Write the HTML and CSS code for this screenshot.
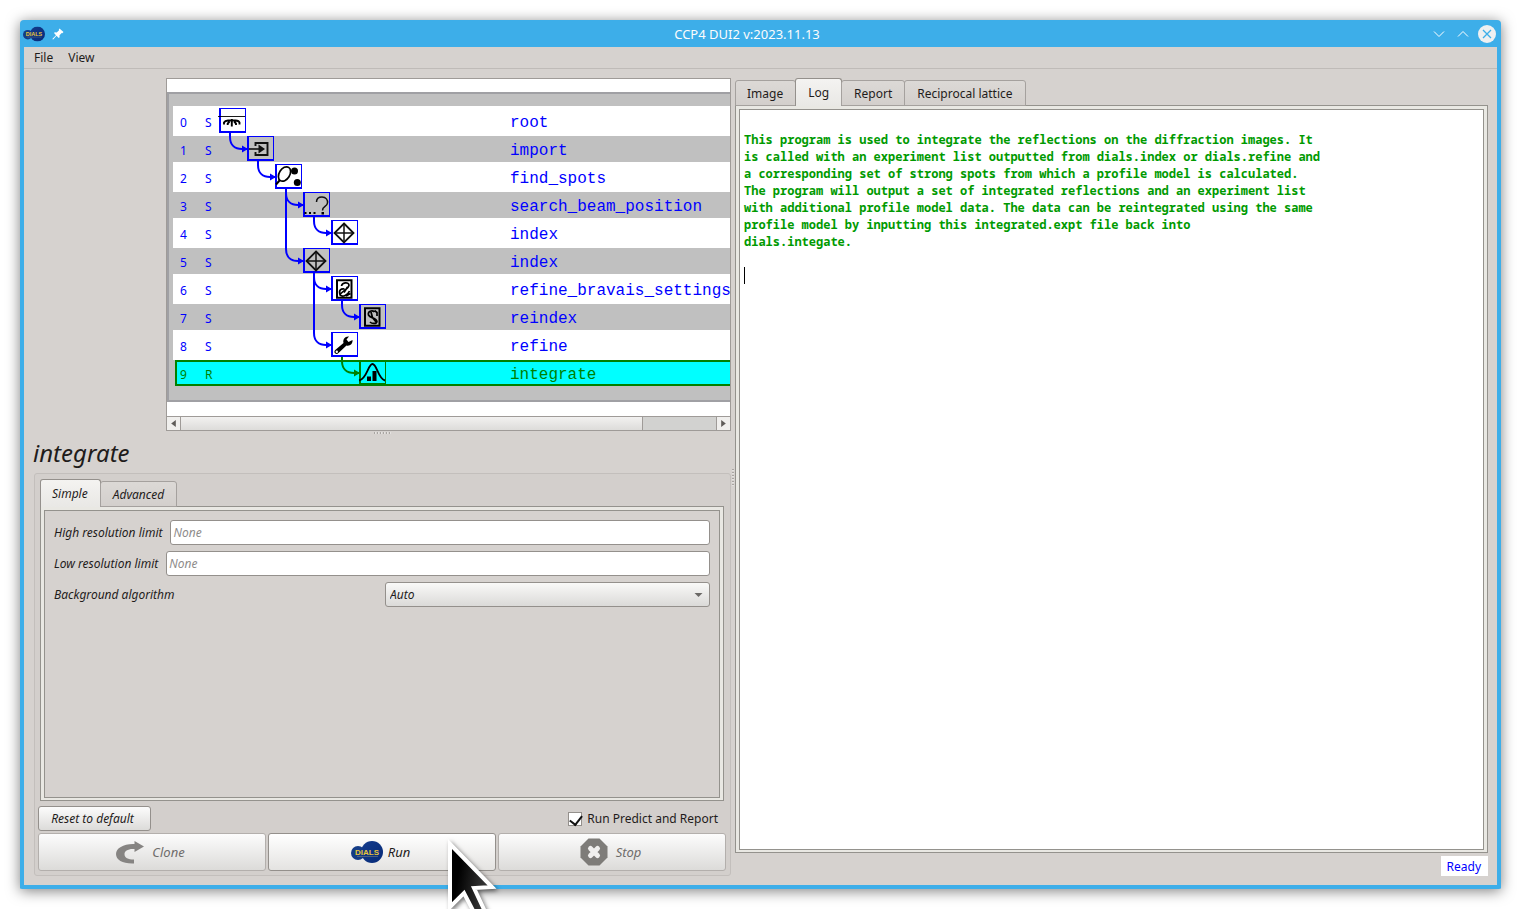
FILE: index.html
```html
<!DOCTYPE html>
<html lang="en">
<head>
<meta charset="utf-8">
<title>CCP4 DUI2 v:2023.11.13</title>
<link rel="stylesheet" href="styles.css">
</head>
<body>
<svg class="defs" aria-hidden="true">
  <defs>
    <linearGradient id="ball" x1="0" y1="0" x2="1" y2="1"><stop offset="0" stop-color="#143c8c"/><stop offset="1" stop-color="#062a78"/></linearGradient>
    <linearGradient id="arrow-fill" x1="0" y1="0.3" x2="1" y2="0.6"><stop offset="0.2" stop-color="#000"/><stop offset="1" stop-color="#444"/></linearGradient>
    <symbol id="dials" viewBox="0 0 32 22">
      <circle cx="7" cy="12" r="7" fill="#143c86"/>
      <circle cx="21" cy="11" r="11" fill="url(#ball)"/>
      <text x="16" y="14" class="dials-text">DIALS</text>
      <path d="M6 15.500H27" stroke="#8d8f78" stroke-width="0.5"/>
    </symbol>
    <path id="box" fill-rule="evenodd" d="M0 0h27v25h-27zM2 1v22h24v-22z"/>
    <g id="edge">
      <path fill="none" stroke="currentColor" stroke-width="2" d="M-17 -4V1C-17 9 -12 13 -5 13H0"/>
      <path fill="currentColor" d="M-5 9.500L1 13L-5 16.500z"/>
    </g>
    <g id="i-index" fill="none" stroke="#111">
      <path stroke-width="1.800" d="M13 3.500L22.500 13L13 22.500L3.500 13z"/>
      <path stroke-width="1.500" d="M13 3.500V22.500M3.500 13H22.500"/>
    </g>
  </defs>
</svg>
<div class="window">
  <header class="titlebar">
    <svg class="app-icon" viewBox="0 0 32 22"><use href="#dials"/></svg>
    <svg class="pin" viewBox="0 0 12 12"><path fill="#fff" d="M7.500 0.500L11.500 4L10.300 5.200L9.700 5L7.500 7.300L7.600 9.300L6.800 10L4.500 7.800L1.200 11.500L0.500 11.300L0.500 10.700L4 7.300L2 5L2.800 4.300L4.700 4.500L7.100 2.300L6.800 1.500z"/></svg>
    <h1 class="caption">CCP4 DUI2 v:2023.11.13</h1>
    <button class="win-btn" aria-label="Minimize"><svg viewBox="0 0 18 18"><path d="M4 6.500L9 11.500L14 6.500" fill="none" stroke="#fff"/></svg></button>
    <button class="win-btn" aria-label="Maximize"><svg viewBox="0 0 18 18"><path d="M4 11.500L9 6.500L14 11.500" fill="none" stroke="#fff"/></svg></button>
    <button class="win-btn" aria-label="Close"><svg viewBox="0 0 18 18"><circle cx="9" cy="9" r="9" fill="#eff0f1"/><path d="M5 5L13 13M13 5L5 13" stroke="#3daee9" stroke-width="1.300"/></svg></button>
  </header>
  <nav class="menubar"><button class="menu">File</button><button class="menu">View</button></nav>

  <main class="workspace">
    <section class="left">
      <div class="tree">
        <svg class="scene">
          <rect x="1" y="14" width="900" height="308" fill="#c0c0c0" stroke="#a0a0a4" stroke-width="2"/>
          <g fill="#fff">
            <rect x="6" y="27" width="900" height="30"/><rect x="6" y="83" width="900" height="30"/>
            <rect x="6" y="139" width="900" height="30"/><rect x="6" y="195" width="900" height="30"/>
            <rect x="6" y="251" width="900" height="30"/>
          </g>
          <rect x="9" y="282" width="900" height="24" fill="#0ff" stroke="#008000" stroke-width="2"/>
          <g class="ids">
            <text x="13" y="48">0</text><text x="38" y="48">S</text>
            <text x="13" y="76">1</text><text x="38" y="76">S</text>
            <text x="13" y="104">2</text><text x="38" y="104">S</text>
            <text x="13" y="132">3</text><text x="38" y="132">S</text>
            <text x="13" y="160">4</text><text x="38" y="160">S</text>
            <text x="13" y="188">5</text><text x="38" y="188">S</text>
            <text x="13" y="216">6</text><text x="38" y="216">S</text>
            <text x="13" y="244">7</text><text x="38" y="244">S</text>
            <text x="13" y="272">8</text><text x="38" y="272">S</text>
            <g class="running"><text x="13" y="300">9</text><text x="38" y="300">R</text></g>
          </g>
          <g class="names">
            <text x="343" y="48">root</text>
            <text x="343" y="76">import</text>
            <text x="343" y="104">find_spots</text>
            <text x="343" y="132">search_beam_position</text>
            <text x="343" y="160">index</text>
            <text x="343" y="188">index</text>
            <text x="343" y="216">refine_bravais_settings</text>
            <text x="343" y="244">reindex</text>
            <text x="343" y="272">refine</text>
            <text x="343" y="300" class="running">integrate</text>
          </g>
          <g class="edges">
            <use href="#edge" x="80" y="57"/><use href="#edge" x="108" y="85"/>
            <use href="#edge" x="136" y="113"/><use href="#edge" x="164" y="141"/>
            <use href="#edge" x="136" y="169"/><use href="#edge" x="164" y="197"/>
            <use href="#edge" x="192" y="225"/><use href="#edge" x="164" y="253"/>
            <path d="M119 110V170M147 194V254" stroke="currentColor" stroke-width="2"/>
            <use href="#edge" x="192" y="281" class="running"/>
          </g>
          <g class="boxes">
            <use href="#box" x="52" y="29"/><use href="#box" x="80" y="57"/>
            <use href="#box" x="108" y="85"/><use href="#box" x="136" y="113"/>
            <use href="#box" x="164" y="141"/><use href="#box" x="136" y="169"/>
            <use href="#box" x="164" y="197"/><use href="#box" x="192" y="225"/>
            <use href="#box" x="164" y="253"/><use href="#box" x="192" y="281" class="running"/>
          </g>
          <g transform="translate(52 29)" fill="none" stroke="#000">
            <path d="M-1 8.500H26" stroke-width="0.900"/>
            <path stroke-width="1.900" d="M5 16.500V14.500Q6 12.800 9 12.500H16.500Q20 12.800 20.500 14.500V16.500M12.800 11V18.500M8.700 17V15.500L10.500 13.500M17 17V15.500L15.200 13.500"/>
          </g>
          <g transform="translate(80 57)" fill="none" stroke="#111">
            <path stroke-width="1.900" d="M8.500 10V7H20.500V19H8.500V16"/>
            <path stroke-width="1.600" d="M2 13H13"/><path fill="#111" stroke="none" d="M11.500 8.500L18 13L11.500 17.500z"/>
          </g>
          <g transform="translate(108 85)">
            <ellipse cx="9.500" cy="10" rx="5.300" ry="7.800" transform="rotate(32 9.500 10)" fill="none" stroke="#000" stroke-width="1.700"/>
            <path d="M5 16L1 20.500" stroke="#000" stroke-width="2"/>
            <circle cx="19.500" cy="7" r="3.500"/><circle cx="22.300" cy="18.500" r="3.500"/>
          </g>
          <g transform="translate(136 113)">
            <path fill="none" stroke="#111" stroke-width="1.500" d="M13.500 10C13.500 6 16 5 19 5C23 5 25 8 24.500 11C24 15 19.500 14 19.500 18.500"/>
            <path d="M1.500 20h2v2h-2zM6 20h2v2h-2zM10.500 20h2v2h-2zM18.500 20h2.500v2.500h-2.500z"/>
          </g>
          <use href="#i-index" x="164" y="141"/>
          <use href="#i-index" x="136" y="169"/>
          <g transform="translate(164 197)" fill="none" stroke="#000">
            <path stroke-width="2" d="M6 4.300H20.500V21.700H6z"/>
            <path stroke-width="1.700" d="M10.500 10C11 6.500 17.500 5.500 18 9C18 13 10 15.500 9 19C11.500 21.500 17 19 18.500 15M9 18.500C7.500 14 10 12.500 13.500 13M13 16.500L16.500 11M15 20L19.500 17.500"/>
          </g>
          <g transform="translate(192 225)" fill="none" stroke="#000">
            <path stroke-width="2" d="M6 4.300H20.500V21.700H6z"/>
            <path stroke-width="1.700" d="M15.500 8C13 5.500 8.500 7.500 9.500 11C11 14 17.500 14 18 17.500C17.500 20 13 20 11 18M12 8L13.500 13.500L17.500 18.500M15.500 6.500L18 8.500V12"/>
          </g>
          <g transform="translate(164 253)">
            <path d="M4.200 18L12.500 11C11.500 7.500 14 4 18 4.500L15.500 7.500L17.500 10L21.500 8C22 12 18.500 14.500 15.500 13.500L7.500 21C5.500 23.500 1.800 20.500 4.200 18z"/><circle cx="5.800" cy="19.800" r="1.200" fill="#fff"/>
          </g>
          <g transform="translate(192 281)">
            <path fill="none" stroke="#000" stroke-width="1.800" d="M0 20.500C8 19 9 4 13.500 4C18 4 19 19 26 20.500"/>
            <path d="M8 16.500h4v4.500h-4zM13.500 11h4v10h-4z"/>
          </g>
        </svg>
        <div class="scrollbar">
          <button class="step" aria-label="Scroll left"><svg viewBox="0 0 4 6"><path d="M4 0V6L0 3z"/></svg></button>
          <div class="trough"><div class="thumb"></div></div>
          <button class="step" aria-label="Scroll right"><svg viewBox="0 0 4 6"><path d="M0 0V6L4 3z"/></svg></button>
        </div>
      </div>
      <div class="grip"></div>
      <h2 class="step-title">integrate</h2>
      <section class="group">
        <div class="tabs params" role="tablist">
          <button class="tab on" role="tab" aria-selected="true">Simple</button>
          <button class="tab" role="tab">Advanced</button>
        </div>
        <div class="frame params-frame">
          <form class="inner form">
            <div class="field"><label for="hi">High resolution limit</label><input id="hi" class="box" type="text" placeholder="None"></div>
            <div class="field"><label for="lo">Low resolution limit</label><input id="lo" class="box" type="text" placeholder="None"></div>
            <div class="field split"><label for="bg">Background algorithm</label>
              <span class="combo"><select id="bg"><option>Auto</option></select><svg viewBox="0 0 8 4"><path fill="#6b6966" d="M0 0H8L4 4z"/></svg></span></div>
          </form>
        </div>
        <div class="options">
          <button class="btn reset">Reset to default</button>
          <label class="check"><input type="checkbox" checked>Run Predict and Report</label>
        </div>
        <div class="actions">
          <button class="btn big" disabled><svg class="i-clone" viewBox="0 0 28 23"><path fill="#868482" d="M18.500 0L28 5.500L18.500 11V8C12 7.500 8.500 10 8.500 13C8.500 17 12 18.500 18 18.500V22.500C7 23 0 19 0 13C0 7 8 2.500 18.500 3z"/></svg>Clone</button>
          <button class="btn big run"><svg class="i-dials" viewBox="0 0 32 22"><use href="#dials"/></svg>Run
            <svg class="pointer" viewBox="0 0 60 90"><path fill="url(#arrow-fill)" stroke="#fff" stroke-width="4" d="M4 6L46 49L28 50L42 80L33 84L18 55L4 69z"/></svg>
          </button>
          <button class="btn big" disabled><svg class="i-stop" viewBox="0 0 28 28"><path fill="#7e7c79" d="M8.500 0.500H19.500L27.500 8.500V19.500L19.500 27.500H8.500L0.500 19.500V8.500z"/><path stroke="#f0efee" stroke-width="5" stroke-linecap="round" d="M10.500 10.500L17.500 17.500M17.500 10.500L10.500 17.500"/></svg>Stop</button>
        </div>
      </section>
    </section>

    <section class="right">
      <div class="tabs" role="tablist">
        <button class="tab" role="tab">Image</button>
        <button class="tab on" role="tab" aria-selected="true">Log</button>
        <button class="tab" role="tab">Report</button>
        <button class="tab" role="tab">Reciprocal lattice</button>
      </div>
      <div class="frame log-frame">
        <textarea class="inner log" aria-label="Log" readonly spellcheck="false">

This program is used to integrate the reflections on the diffraction images. It
is called with an experiment list outputted from dials.index or dials.refine and
a corresponding set of strong spots from which a profile model is calculated.
The program will output a set of integrated reflections and an experiment list
with additional profile model data. The data can be reintegrated using the same
profile model by inputting this integrated.expt file back into
dials.integate.
</textarea>
        <span class="caret"></span>
      </div>
      <output class="status">Ready</output>
      <div class="grip vertical"></div>
    </section>
  </main>
</div>
</body>
</html>
```
FILE: styles.css
```css
* { box-sizing: border-box; }
body {
  margin: 0;
  height: 100vh;
  padding: 20px;
  overflow: hidden;
  background: #fff;
  color: #1f1c1b;
  font: 12px/16px "Noto Sans", sans-serif;
}
button, input, select, textarea { font: inherit; color: inherit; margin: 0; }
button { padding: 0; border: 0; background: none; }
svg { display: block; flex: none; }
.defs { position: absolute; width: 0; height: 0; }
.window {
  display: flex;
  flex-direction: column;
  height: 100%;
  border: 4px solid #3daee9;
  border-top: 0;
  border-radius: 4px 4px 2px 2px;
  background: #d6d2cf;
  box-shadow: 0 2px 14px rgba(0, 0, 0, 0.5);
}
.titlebar {
  flex: none;
  display: flex;
  align-items: center;
  height: 27px;
  gap: 6px;
  background: #3daee9;
  color: #fcfcfc;
}
.app-icon { width: 22px; height: 16px; margin-left: -1px; }
.pin { width: 12px; height: 12px; margin-left: 1px; }
.caption { flex: 1; margin: 0; text-align: center; font-size: 13px; font-weight: 400; }
.win-btn { width: 18px; height: 18px; margin-right: 1px; }
.win-btn + .win-btn { margin-left: -1px; }
.dials-text { font: bold 8px "Liberation Sans", sans-serif; fill: #e8c53a; text-anchor: middle; }

.menubar { flex: none; display: flex; gap: 15px; height: 22px; padding: 1px 10px 0; border-bottom: 1px solid #bfbbb8; }
.menu { height: 20px; }

.workspace {
  flex: 1;
  min-height: 0;
  display: grid;
  grid-template-columns: minmax(0, 707fr) minmax(0, 753fr);
  column-gap: 4px;
  padding: 9px 9px 9px 0;
}
.left { display: flex; flex-direction: column; min-height: 0; padding-left: 10px; }
.tree { flex: none; margin-left: 132px; border: 1px solid #9f9b98; background: #fff; }
.scene { width: 100%; height: 337px; overflow: hidden; }
.ids { font: 12px "Noto Sans", sans-serif; fill: #00f; }
.names { font: 16px "Liberation Mono", monospace; fill: #00f; }
.edges { color: #00f; }
.boxes { fill: #00f; }
.ids .running, .names .running, .boxes .running { fill: #008000; }
.edges .running { color: #008000; }

.scrollbar { display: flex; height: 14px; border-top: 1px solid #9f9b98; }
.step { display: flex; align-items: center; justify-content: center; width: 13px; background: #f0efed; }
.step svg { width: 5px; height: 7px; fill: #5f5c59; }
.trough { flex: 1; background: #d2d2d0; border: solid #9f9b98; border-width: 0 1px; }
.thumb { width: 462px; max-width: 87%; height: 100%; border-right: 1px solid #9f9b98; background: linear-gradient(#f2f1f0, #dddcda); }
.grip { align-self: center; width: 18px; height: 2px; margin-top: 1px; background: repeating-linear-gradient(90deg, #a9a5a2 0 1px, #e4e2e0 1px 2px, transparent 2px 3px); }
.step-title { margin: 2px 0 4px -1px; font-size: 24px; line-height: 33px; font-style: italic; font-weight: 400; }
.group {
  flex: 1;
  min-height: 0;
  display: flex;
  flex-direction: column;
  padding: 5px 4px 4px 3px;
  border: 1px solid #c3bfbc;
  border-radius: 3px;
  background: #d3cfcc;
  font-style: italic;
}
.tabs { flex: none; display: flex; align-items: flex-end; height: 28px; margin-bottom: -1px; position: relative; z-index: 1; }
.tab {
  height: 26px;
  padding: 2px 12px 0;
  margin-left: -1px;
  border: 1px solid #a5a19e;
  border-radius: 3px 3px 0 0;
  background: linear-gradient(#dcd9d6, #d3cfcc);
}
.tab:first-child { margin-left: 0; padding-left: 11px; }
.tab.on { height: 28px; padding-top: 0; border-color: #94908c; border-bottom: 0; background: linear-gradient(#f4f3f1, #e9e8e5); }
.params { margin-left: 2px; font-style: italic; }
.frame { flex: 1; min-height: 0; display: flex; padding: 3px 3px 2px; border: 1px solid #94928d; background: #e9e8e3; position: relative; }
.params-frame { margin: 0 2px; }
.inner { flex: 1; min-width: 0; border: 1px solid #94928d; }
.form { display: flex; flex-direction: column; gap: 6px; padding: 9px; background: #d6d2cf; }
.field { display: flex; align-items: center; gap: 8px; height: 25px; }
.field input, .combo select { height: 25px; border: 1px solid #94908c; border-radius: 3px; font-style: italic; }
.field input { flex: 1; min-width: 0; padding: 0 2px; background: #fff; }
.field input::placeholder { color: #8e8c8b; opacity: 1; }
.split { gap: 0; }
.split label { flex: 331 0 0; }
.combo { flex: 325 0 0; position: relative; }
.combo select { width: 100%; padding: 0 4px; appearance: none; background: linear-gradient(#f9f9f8, #dbdad8); }
.combo svg { position: absolute; right: 7px; top: 11px; width: 9px; height: 4px; pointer-events: none; }
.options { flex: none; display: flex; justify-content: space-between; align-items: center; height: 25px; margin: 5px 0 2px; padding-right: 8px; }
.btn {
  border: 1px solid #94908c;
  border-radius: 3px;
  background: linear-gradient(#fcfcfc, #dcdbd9);
  font-style: italic;
}
.reset { width: 113px; height: 25px; padding-right: 4px; }
.check { display: flex; align-items: center; gap: 5px; font-style: normal; }
.check input { appearance: none; width: 14px; height: 14px; border: 1px solid #94908c; background: #fff; position: relative; }
.check input:checked::after { content: ""; position: absolute; left: 3px; top: 0; width: 6px; height: 10px; border: solid #111; border-width: 0 2px 2px 0; transform: rotate(38deg); }
.actions { flex: none; display: flex; gap: 2px; }
.big { flex: 1; height: 38px; display: flex; align-items: center; justify-content: center; gap: 5px; padding-right: 3px; font-size: 13px; position: relative; }
.big:disabled { color: #6f6d6b; border-color: #b3afac; }
.run { background: linear-gradient(#fff, #e4e3e1); }
.i-clone { width: 28px; height: 23px; margin-right: 3px; }
.i-dials { width: 32px; height: 22px; }
.i-stop { width: 28px; height: 28px; margin-right: 3px; }
.pointer { position: absolute; left: 177px; top: 4px; width: 60px; height: 90px; z-index: 2; filter: drop-shadow(2px 2px 2px rgba(0, 0, 0, 0.5)); }

.right { display: flex; flex-direction: column; min-height: 0; position: relative; }
.log { padding: 4px; resize: none; outline: 0; background: #fff; color: #009a00; font: bold 12px/17px "Noto Sans Mono", "DejaVu Sans Mono", monospace; }
.caret { position: absolute; left: 8px; top: 161px; width: 1px; height: 17px; background: #000; }
.status { flex: none; align-self: flex-end; margin-top: 3px; padding: 3px 7px 1px 6px; background: #fff; color: #00f; line-height: 16px; }
.vertical { position: absolute; left: -3px; top: 391px; width: 2px; height: 18px; margin: 0; background: repeating-linear-gradient(#a9a5a2 0 1px, #e4e2e0 1px 2px, transparent 2px 3px); }
```
